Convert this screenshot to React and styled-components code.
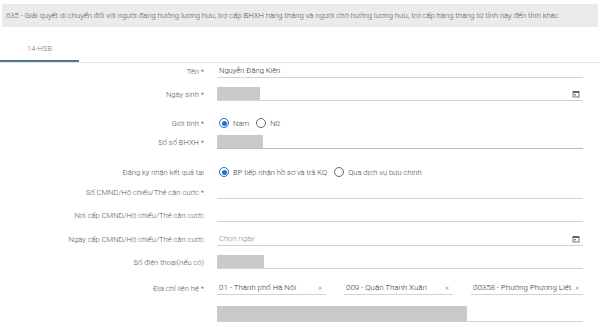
import React from "react";
import styled, { createGlobalStyle } from "styled-components";

const Global = createGlobalStyle`
  body {
    margin: 0;
    background: #fff;
    font-family: Roboto, "Liberation Sans", sans-serif;
  }
`;

const Page = styled.div`
  width: 600px;
  height: 327px;
  overflow: hidden;
  padding-top: 4px;
  box-sizing: border-box;
`;

const Title = styled.div`
  margin: 0 2px;
  height: 23px;
  display: flex;
  align-items: center;
  padding-left: 4px;
  background: #ebebeb;
  color: #555;
  font-size: 7.7px;
  font-weight: 300;
  white-space: nowrap;
`;

const Tabs = styled.div`
  height: 35px;
  display: flex;
  align-items: flex-end;
  border-bottom: 1px solid #e6e6e6;
`;

const Tab = styled.div`
  width: 79px;
  height: 34px;
  display: flex;
  align-items: center;
  justify-content: center;
  padding-top: 8px;
  box-sizing: border-box;
  color: #777;
  font-size: 7.6px;
  font-weight: 300;
  border-bottom: 2px solid #4a7b8d;
`;

const Form = styled.div`
  padding-top: 1px;
`;

const Row = styled.div`
  display: grid;
  grid-template-columns: 204px 366px;
  column-gap: 13px;
  align-items: center;
  height: ${(p) => p.$h || 14}px;
  margin-top: ${(p) => p.$mt || 0}px;
`;

const Label = styled.div`
  text-align: right;
  color: #555;
  font-size: 7.6px;
  font-weight: 300;
  white-space: nowrap;
`;

const Field = styled.div`
  height: 100%;
  display: flex;
  align-items: center;
  justify-content: space-between;
  border-bottom: 1px solid ${(p) => (p.$dark ? "#bcbcbc" : "#d2d2d2")};
  box-sizing: border-box;
  padding-left: 2px;
  color: ${(p) => (p.$placeholder ? "#888" : "#333")};
  font-size: ${(p) => (p.$big ? 7.9 : 7.6)}px;
  font-weight: 300;
  white-space: nowrap;
`;

const Blur = styled.div`
  align-self: stretch;
  width: ${(p) => p.$w}px;
  margin-left: -2px;
  background: #c9c9c9;
`;

const Options = styled.div`
  display: flex;
  align-items: center;
  gap: 4px;
  color: #444;
  font-size: 7.6px;
  font-weight: 300;
`;

const Radio = styled.span`
  width: 10px;
  height: 10px;
  box-sizing: border-box;
  border-radius: 50%;
  border: 1px solid ${(p) => (p.$on ? "#1e6fc8" : "#666")};
  display: inline-flex;
  align-items: center;
  justify-content: center;
  margin-left: ${(p) => (p.$first ? 2 : 3)}px;
  &::after {
    content: "";
    width: 5px;
    height: 5px;
    border-radius: 50%;
    background: ${(p) => (p.$on ? "#1e6fc8" : "transparent")};
  }
`;

const Selects = styled.div`
  display: grid;
  grid-template-columns: repeat(3, 1fr);
  column-gap: 18px;
  height: 100%;
`;

const Clear = styled.span`
  color: #777;
  font-size: 7px;
  margin-left: 4px;
  padding-right: 4px;
`;

function CalendarIcon() {
  return (
    <svg width="8" height="8" viewBox="0 0 8 8" style={{ marginRight: 3 }}>
      <rect x="1" y="1.5" width="6" height="5.5" fill="none" stroke="#555" strokeWidth="0.8" />
      <rect x="1" y="1.5" width="6" height="1.4" fill="#555" />
      <rect x="2.4" y="4" width="1.4" height="1.4" fill="#555" />
    </svg>
  );
}

export default function App() {
  return (
    <Page>
      <Global />
      <Title>
        635 - Giải quyết di chuyển đối với người đang hưởng lương hưu, trợ cấp BHXH hàng tháng và người chờ hưởng lương hưu, trợ cấp hàng tháng từ tỉnh này đến tỉnh khác
      </Title>
      <Tabs>
        <Tab>14-HSB</Tab>
      </Tabs>
      <Form>
        <Row $h={14}>
          <Label>Tên *</Label>
          <Field>Nguyễn Đăng Kiên</Field>
        </Row>
        <Row $mt={9}>
          <Label>Ngày sinh *</Label>
          <Field>
            <Blur $w={43} />
            <CalendarIcon />
          </Field>
        </Row>
        <Row $mt={15}>
          <Label>Giới tính *</Label>
          <Options>
            <Radio $on $first />
            <span>Nam</span>
            <Radio />
            <span>Nữ</span>
          </Options>
        </Row>
        <Row $mt={5}>
          <Label>Số sổ BHXH *</Label>
          <Field $dark>
            <Blur $w={46} />
          </Field>
        </Row>
        <Row $mt={16}>
          <Label>Đăng ký nhận kết quả tại</Label>
          <Options>
            <Radio $on $first />
            <span>BP tiếp nhận hồ sơ và trả KQ</span>
            <Radio />
            <span>Qua dịch vụ bưu chính</span>
          </Options>
        </Row>
        <Row $mt={6}>
          <Label>Số CMND/Hộ chiếu/Thẻ căn cước *</Label>
          <Field />
        </Row>
        <Row $mt={9}>
          <Label>Nơi cấp CMND/Hộ chiếu/Thẻ căn cước</Label>
          <Field />
        </Row>
        <Row $mt={10}>
          <Label>Ngày cấp CMND/Hộ chiếu/Thẻ căn cước</Label>
          <Field $placeholder>
            Chọn ngày
            <CalendarIcon />
          </Field>
        </Row>
        <Row $mt={9}>
          <Label>Số điện thoại(nếu có)</Label>
          <Field>
            <Blur $w={47} />
          </Field>
        </Row>
        <Row $mt={12}>
          <Label>Địa chỉ liên hệ *</Label>
          <Selects>
            <Field $big>
              01 - Thành phố Hà Nội<Clear>×</Clear>
            </Field>
            <Field $big>
              009 - Quận Thanh Xuân<Clear>×</Clear>
            </Field>
            <Field $big>
              00358 - Phường Phương Liệt<Clear>×</Clear>
            </Field>
          </Selects>
        </Row>
        <Row $mt={11} $h={16}>
          <Label />
          <Field>
            <Blur $w={250} />
          </Field>
        </Row>
      </Form>
    </Page>
  );
}
